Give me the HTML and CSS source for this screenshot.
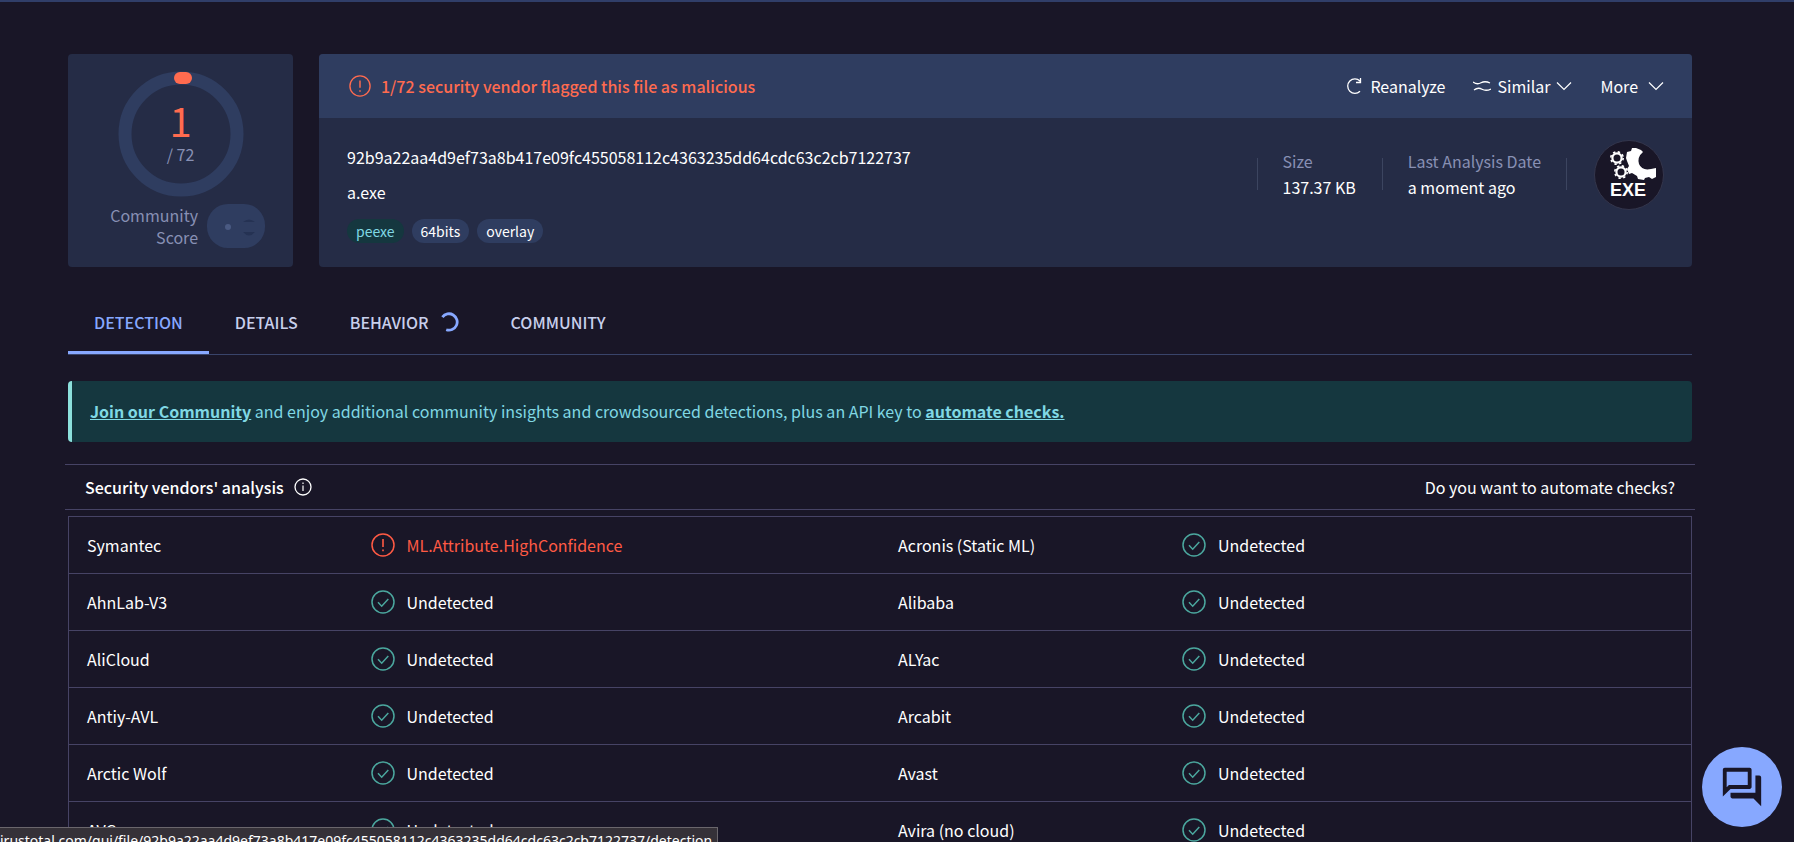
FILE: index.html
```html
<!DOCTYPE html>
<html lang="en">
<head>
  <meta charset="UTF-8" />
  <meta name="viewport" content="width=device-width, initial-scale=1.0"/>
  <title>File report - a.exe</title>
  <link rel="stylesheet" href="styles.css">
</head>
<body>
  <!-- shared icons -->
  <svg class="sprite" aria-hidden="true">
    <symbol id="icon-alert" viewBox="0 0 24 24">
      <circle cx="12" cy="12" r="11" fill="none" stroke="currentColor" stroke-width="1.5"/>
      <path d="M12 6v8M12 16.5v1.8" fill="none" stroke="currentColor" stroke-width="1.6"/>
    </symbol>
    <symbol id="icon-check" viewBox="0 0 24 24">
      <circle cx="12" cy="12" r="11" fill="none" stroke="currentColor" stroke-width="1.5"/>
      <path d="M7 12.3l3.7 3.9L17.3 9" fill="none" stroke="currentColor" stroke-width="1.5"/>
    </symbol>
    <symbol id="icon-down" viewBox="0 0 16 16">
      <path d="M1 4.5l7 7 7-7" fill="none" stroke="currentColor" stroke-width="1.2"/>
    </symbol>
  </svg>

  <main class="container">
    <div class="summary">
      <section class="score-card">
        <div class="ring">
          <svg class="ring-svg" viewBox="0 0 126 126" aria-hidden="true">
            <circle cx="63" cy="63" r="56" fill="none" stroke="#2f3d60" stroke-width="13"/>
            <path d="M62 7h6" stroke="#ff6b4f" stroke-width="12" stroke-linecap="round"/>
          </svg>
          <div class="ring-text">
            <span class="positives">1</span>
            <span class="total">/ 72</span>
          </div>
        </div>
        <div class="community">
          <span class="community-label">Community Score</span>
          <svg class="community-pill" viewBox="0 0 60 46" aria-hidden="true">
            <rect x="1" y="1" width="58" height="44" rx="21" fill="#2f3d60"/>
            <circle cx="22" cy="24" r="3" fill="#4a5a82"/>
            <path d="M37 19q6-5 12 0zM37 29q6 7 12 0z" fill="#253253"/>
          </svg>
        </div>
      </section>

      <section class="file-card">
        <div class="file-head">
          <div class="verdict">
            <svg class="icon-22"><use href="#icon-alert"/></svg>
            <span>1/72 security vendor flagged this file as malicious</span>
          </div>
          <div class="actions">
            <button type="button" class="action">
              <svg class="icon-16" viewBox="0 0 16 16"><path d="M14 3A7.2 7.2 0 1 0 14 13.2M14.5 0v4.5H10" fill="none" stroke="currentColor" stroke-width="1.3"/></svg>
              Reanalyze
            </button>
            <button type="button" class="action similar">
              <svg class="icon-wave" viewBox="0 0 18 12"><path d="M0 2q4 3 8 .8t9 .2M1 10q4-3 8-.8t9-.2" fill="none" stroke="currentColor" stroke-width="1.3"/></svg>
              Similar
              <svg class="icon-16"><use href="#icon-down"/></svg>
            </button>
            <button type="button" class="action more">
              More
              <svg class="icon-16"><use href="#icon-down"/></svg>
            </button>
          </div>
        </div>
        <div class="file-body">
          <div class="file-info">
            <div class="hash">92b9a22aa4d9ef73a8b417e09fc455058112c4363235dd64cdc63c2cb7122737</div>
            <div class="name">a.exe</div>
            <div class="tags">
              <a href="#peexe" class="tag tag-green">peexe</a>
              <a href="#64bits" class="tag">64bits</a>
              <a href="#overlay" class="tag">overlay</a>
            </div>
          </div>
          <div class="file-meta">
            <div class="meta">
              <span class="meta-label">Size</span>
              <span>137.37 KB</span>
            </div>
            <div class="meta meta-date">
              <span class="meta-label">Last Analysis Date</span>
              <span>a moment ago</span>
            </div>
            <svg class="exe" viewBox="0 0 70 70" role="img" aria-label="EXE file">
              <circle cx="35" cy="35" r="34.5" fill="#191627" stroke="#34364c"/>
              <g fill="none" stroke="#fff">
                <circle cx="23" cy="18" r="4.6" stroke-width="2.2"/>
                <circle cx="23" cy="18" r="6.2" stroke-width="1.6" stroke-dasharray="2.4 2.47"/>
                <circle cx="27" cy="32" r="4.6" stroke-width="2.2"/>
                <circle cx="27" cy="32" r="6.2" stroke-width="1.6" stroke-dasharray="2.4 2.47"/>
              </g>
              <path d="M42 8l5 2 2 2q-6 5-4 12 3 7 12 5l5-1 0 9-4 2-3-2-4 1-1 2-6-1-1-3-5-3-3 1-2-5 2-3-2-5-1-3 1-6 4-1 1-3z" fill="#fff"/>
              <text x="34" y="56" class="exe-text">EXE</text>
            </svg>
          </div>
        </div>
      </section>
    </div>

    <nav class="tabs">
      <a href="#detection" class="tab active">DETECTION</a>
      <a href="#details" class="tab">DETAILS</a>
      <a href="#behavior" class="tab">BEHAVIOR
        <svg class="spinner" viewBox="0 0 20 20"><path d="M3.4 5.1A8.2 8.2 0 1 1 7.2 17.7" fill="none" stroke="#87a8ff" stroke-width="2.8"/></svg>
      </a>
      <a href="#community" class="tab">COMMUNITY</a>
    </nav>

    <div class="banner">
      <p><a href="#join">Join our Community</a> and enjoy additional community insights and crowdsourced detections, plus an API key to <a href="#automate">automate checks.</a></p>
    </div>

    <div class="vendors-head">
      <h2>Security vendors' analysis
        <svg class="icon-18" viewBox="0 0 18 18"><circle cx="9" cy="9" r="8" fill="none" stroke="currentColor" stroke-width="1.3"/><path d="M9 7.5V13M9 4.5V6" stroke="currentColor" stroke-width="1.2"/></svg>
      </h2>
      <a href="#automate">Do you want to automate checks?</a>
    </div>

    <table class="vendors">
      <tbody>
        <tr>
          <td>Symantec</td>
          <td class="bad"><span><svg class="icon-24"><use href="#icon-alert"/></svg>ML.Attribute.HighConfidence</span></td>
          <td>Acronis (Static ML)</td>
          <td class="ok"><span><svg class="icon-24"><use href="#icon-check"/></svg>Undetected</span></td>
        </tr>
        <tr>
          <td>AhnLab-V3</td>
          <td class="ok"><span><svg class="icon-24"><use href="#icon-check"/></svg>Undetected</span></td>
          <td>Alibaba</td>
          <td class="ok"><span><svg class="icon-24"><use href="#icon-check"/></svg>Undetected</span></td>
        </tr>
        <tr>
          <td>AliCloud</td>
          <td class="ok"><span><svg class="icon-24"><use href="#icon-check"/></svg>Undetected</span></td>
          <td>ALYac</td>
          <td class="ok"><span><svg class="icon-24"><use href="#icon-check"/></svg>Undetected</span></td>
        </tr>
        <tr>
          <td>Antiy-AVL</td>
          <td class="ok"><span><svg class="icon-24"><use href="#icon-check"/></svg>Undetected</span></td>
          <td>Arcabit</td>
          <td class="ok"><span><svg class="icon-24"><use href="#icon-check"/></svg>Undetected</span></td>
        </tr>
        <tr>
          <td>Arctic Wolf</td>
          <td class="ok"><span><svg class="icon-24"><use href="#icon-check"/></svg>Undetected</span></td>
          <td>Avast</td>
          <td class="ok"><span><svg class="icon-24"><use href="#icon-check"/></svg>Undetected</span></td>
        </tr>
        <tr>
          <td>AVG</td>
          <td class="ok"><span><svg class="icon-24"><use href="#icon-check"/></svg>Undetected</span></td>
          <td>Avira (no cloud)</td>
          <td class="ok"><span><svg class="icon-24"><use href="#icon-check"/></svg>Undetected</span></td>
        </tr>
      </tbody>
    </table>
  </main>

  <button type="button" class="chat" aria-label="Open comments">
    <svg viewBox="0 0 24 24"><path d="M15 4v7H5.17L4 12.17V4h11m1-2H3c-.55 0-1 .45-1 1v14l4-4h10c.55 0 1-.45 1-1V3c0-.55-.45-1-1-1zm5 4h-2v9H6v2c0 .55.45 1 1 1h11l4 4V7c0-.55-.45-1-1-1z"/></svg>
  </button>

  <div class="status-bar">irustotal.com/gui/file/92b9a22aa4d9ef73a8b417e09fc455058112c4363235dd64cdc63c2cb7122737/detection</div>
</body>
</html>
```

FILE: styles.css
```css
* {
  box-sizing: border-box;
}
html {
  overflow: hidden;
}
body {
  font-family: "Noto Sans CJK SC", sans-serif;
  font-size: 16px;
  line-height: 24px;
  background-color: #191627;
  color: #fff;
  margin: 0;
  border-top: 2px solid #303e69;
  height: 100vh;
  overflow: hidden;
}
a {
  color: inherit;
  text-decoration: none;
}
button {
  font: inherit;
  color: inherit;
  background: none;
  border: none;
  padding: 0;
  cursor: pointer;
}
svg {
  flex: none;
}
.sprite {
  display: none;
}
.icon-16 {
  width: 16px;
  height: 16px;
}
.icon-18 {
  width: 18px;
  height: 18px;
}
.icon-22 {
  width: 22px;
  height: 22px;
}
.icon-24 {
  width: 24px;
  height: 24px;
}
.icon-wave {
  width: 18px;
  height: 12px;
}
.container {
  margin: 52px 102px 0 68px;
}

/* summary cards */
.summary {
  display: flex;
  gap: 26px;
}
.score-card {
  width: 225px;
  height: 213px;
  padding-top: 17px;
  background-color: #252c46;
  border-radius: 4px;
}
.ring {
  display: grid;
  width: 126px;
  height: 126px;
  margin: 0 auto;
}
.ring-svg,
.ring-text {
  grid-area: 1 / 1;
}
.ring-text {
  display: flex;
  flex-direction: column;
  align-items: center;
  padding-top: 27px;
}
.positives {
  font-size: 40px;
  line-height: 44px;
  color: #ff6b4f;
}
.total {
  color: #8890b4;
}
.community {
  display: flex;
  align-items: center;
  justify-content: flex-end;
  gap: 8px;
  padding-right: 27px;
  margin-top: 6px;
}
.community-label {
  width: 90px;
  line-height: 22px;
  text-align: right;
  color: #8890b4;
}
.community-pill {
  width: 60px;
  height: 46px;
}
.file-card {
  flex: 1;
  background-color: #252c46;
  border-radius: 4px;
  overflow: hidden;
}
.file-head {
  display: flex;
  align-items: center;
  justify-content: space-between;
  height: 64px;
  padding: 0 28px 0 30px;
  background-color: #2f3d60;
}
.verdict {
  display: flex;
  align-items: center;
  gap: 10px;
  color: #ff6b4f;
  font-weight: 500;
}
.actions {
  display: flex;
  gap: 28px;
}
.action {
  display: flex;
  align-items: center;
  gap: 8px;
}
.similar {
  gap: 6px;
}
.more {
  gap: 10px;
}
.file-body {
  display: flex;
  justify-content: space-between;
  padding: 22px 28px 0 28px;
}
.hash,
.name {
  line-height: 35px;
}
.tags {
  display: flex;
  gap: 8px;
  margin-top: 9px;
}
.tag {
  padding: 0 9px;
  border-radius: 12px;
  background-color: #2f3d60;
  font-size: 14px;
}
.tag-green {
  background-color: #15373f;
  color: #80d8e4;
}
.file-meta {
  display: flex;
  align-items: flex-start;
}
.meta {
  display: flex;
  flex-direction: column;
  padding: 8px 26px 0;
  line-height: 26px;
  background: linear-gradient(#3c4560, #3c4560) 0 18px / 1px 32px no-repeat;
}
.meta-date {
  background: linear-gradient(#3c4560, #3c4560) 0 18px / 1px 32px no-repeat, linear-gradient(#3c4560, #3c4560) 100% 18px / 1px 32px no-repeat;
}
.meta-label {
  color: #8890b4;
}
.exe {
  width: 70px;
  height: 70px;
  margin-left: 27px;
}
.exe-text {
  font-family: "Liberation Sans", Arial, sans-serif;
  font-size: 18px;
  font-weight: bold;
  fill: #fff;
  text-anchor: middle;
}

/* tabs */
.tabs {
  display: flex;
  margin-top: 26px;
  border-bottom: 1px solid #39446a;
}
.tab {
  display: flex;
  align-items: center;
  gap: 10px;
  height: 61px;
  padding: 0 26px;
  border-bottom: 3px solid transparent;
  color: #c8cfec;
  font-weight: 500;
}
.active {
  color: #87a8ff;
  border-color: #87a8ff;
}
.spinner {
  width: 20px;
  height: 20px;
}
.banner {
  margin-top: 26px;
  padding: 18px;
  background-color: #15373f;
  border-left: 4px solid #8ce0dc;
  border-radius: 4px;
  color: #80d8e4;
}
.banner p {
  margin: 0;
  line-height: 25px;
}
.banner a {
  font-weight: bold;
  text-decoration: underline;
}

/* vendors */
.vendors-head {
  display: flex;
  align-items: center;
  justify-content: space-between;
  height: 46px;
  margin: 22px -3px 6px;
  padding: 0 20px;
  border-top: 1px solid #464365;
  border-bottom: 1px solid #464365;
}
.vendors-head h2 {
  display: flex;
  align-items: center;
  gap: 10px;
  margin: 0;
  font-size: 16px;
  font-weight: 500;
}
.vendors {
  width: 100%;
  table-layout: fixed;
  border-collapse: collapse;
  border: 1px solid #464365;
}
.vendors td {
  height: 57px;
  padding: 0 18px;
  border-top: 1px solid #464365;
}
.vendors td:nth-child(odd) {
  width: 17.5%;
}
.vendors span {
  display: flex;
  align-items: center;
  gap: 12px;
}
.bad {
  color: #ff5a44;
}
.ok svg {
  color: #4ba79e;
}

/* floating parts */
.chat {
  position: fixed;
  right: 12px;
  bottom: 15px;
  display: flex;
  align-items: center;
  justify-content: center;
  width: 80px;
  height: 80px;
  border-radius: 50%;
  background-color: #87a8ff;
}
.chat svg {
  width: 46px;
  height: 46px;
  fill: #191627;
}
.status-bar {
  position: fixed;
  left: 0;
  bottom: 0;
  height: 15px;
  padding-right: 5px;
  overflow: hidden;
  background-color: #353138;
  border: 1px solid #6a666c;
  border-width: 1px 1px 0 0;
  font-family: "Noto Sans", sans-serif;
  font-size: 14px;
  line-height: 26px;
  white-space: nowrap;
}
```
